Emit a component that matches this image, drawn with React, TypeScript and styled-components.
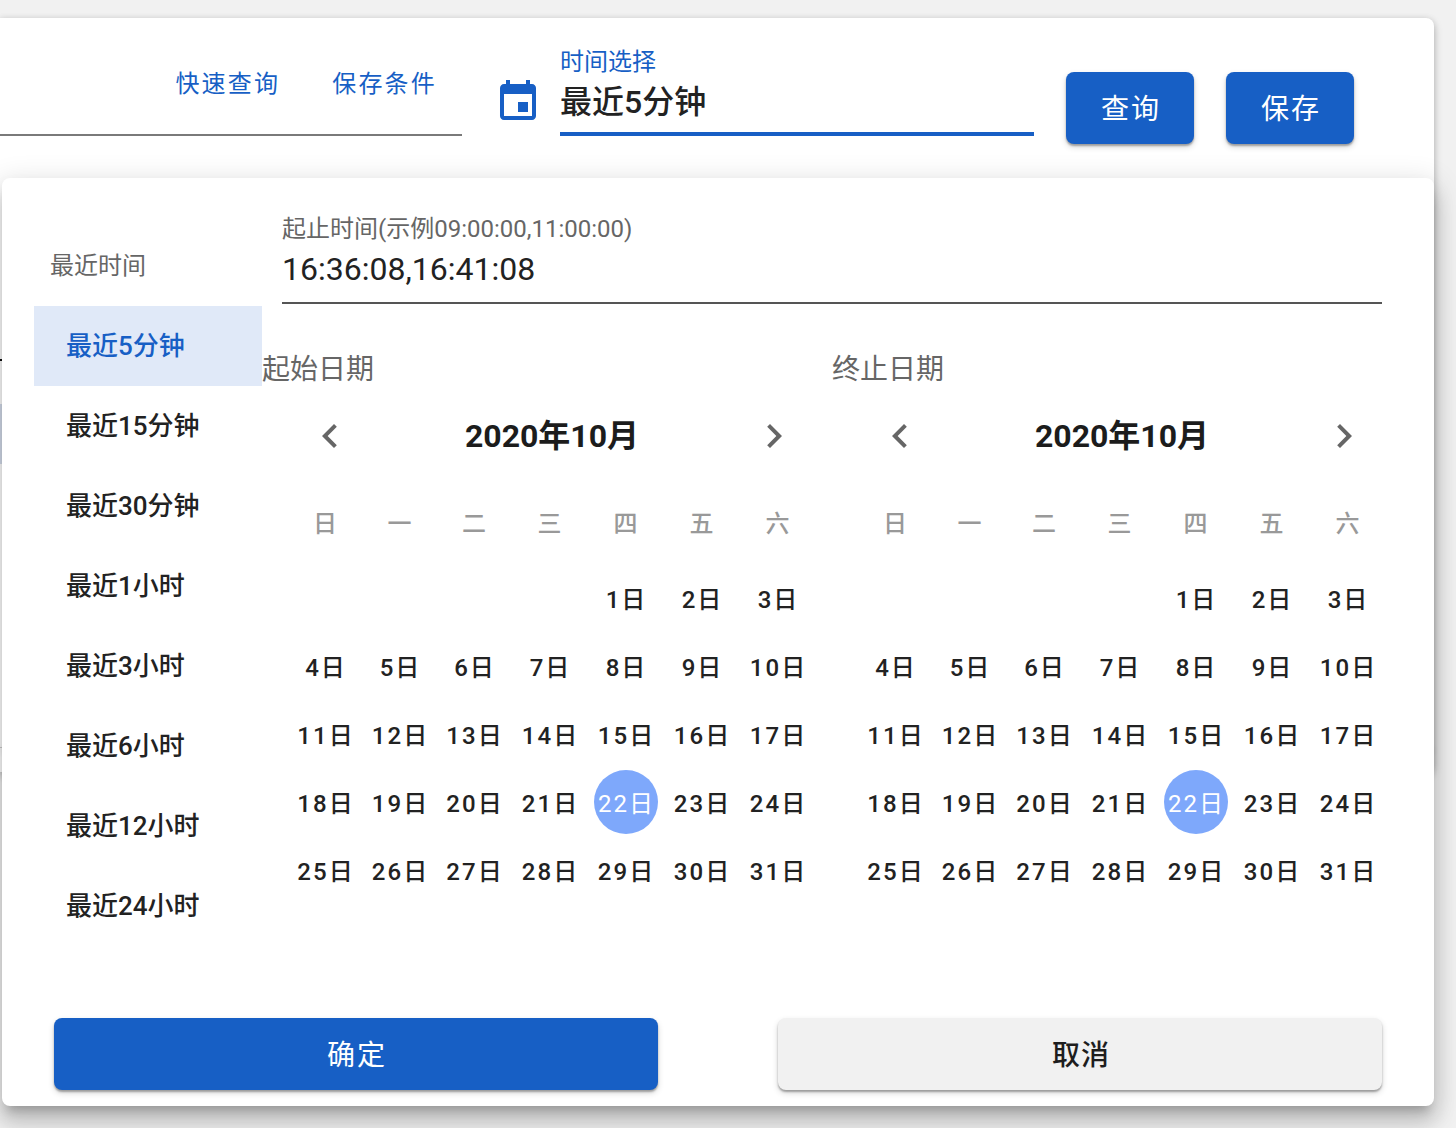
import React from "react";
import styled, { createGlobalStyle } from "styled-components";

const Global = createGlobalStyle`
  html, body { margin: 0; padding: 0; background: #f1f1f1; }
  body { font-family: Roboto, "Noto Sans CJK SC", sans-serif; }
  * { box-sizing: border-box; }
`;

const BLUE = "#175fc5";

const Page = styled.div`
  position: relative;
  height: 1128px;
  width: 1456px;
  padding-top: 18px;
  overflow: hidden;
`;
const Card = styled.section`
  width: 1434px;
  height: 754px;
  background: #fff;
  border-radius: 0 8px 8px 0;
  box-shadow: 0 4px 8px rgba(0,0,0,.25), 0 0 6px rgba(0,0,0,.08);
`;
const HeaderRow = styled.div`
  display: flex;
  align-items: flex-start;
  height: 118px;
`;
const SearchBox = styled.div`
  width: 462px;
  height: 118px;
  border-bottom: 2px solid #7a7a7a;
  display: flex;
  justify-content: flex-end;
  gap: 54px;
  padding: 49px 27px 0 0;
`;
const LinkText = styled.a`
  color: ${BLUE};
  font-size: 24px;
  line-height: 34px;
  letter-spacing: 2.2px;
  margin-right: -2px;
`;
const FieldIcon = styled.svg`
  width: 48px;
  height: 48px;
  margin: 60px 18px 0 32px;
  fill: ${BLUE};
  flex: none;
`;
const DateField = styled.div`
  width: 474px;
  margin-top: 30px;
  padding-bottom: 10px;
  border-bottom: 4px solid ${BLUE};
  height: 88px;
`;
const FieldLabel = styled.div`
  color: ${BLUE};
  font-size: 24px;
  line-height: 28px;
`;
const FieldValue = styled.div`
  color: #222;
  font-size: 32px;
  font-weight: 500;
  line-height: 40px;
  margin-top: 6px;
`;
const HeaderButtons = styled.div`
  display: flex;
  gap: 32px;
  margin: 54px 0 0 32px;
`;
const Raised = styled.button<{ $secondary?: boolean; $wide?: boolean }>`
  width: ${p => (p.$wide ? "604px" : "128px")};
  height: 72px;
  border: 0;
  border-radius: 8px;
  padding: 0 0 2px 2px;
  font-family: inherit;
  font-size: 28px;
  letter-spacing: ${p => (p.$secondary ? "1px" : "2px")};
  font-weight: ${p => (p.$secondary ? 500 : 400)};
  color: ${p => (p.$secondary ? "#1e1e1e" : "#fff")};
  background: ${p => (p.$secondary ? "#f1f1f1" : BLUE)};
  box-shadow: 0 2px 2px rgba(0,0,0,.3), 0 3px 6px rgba(0,0,0,.16);
`;
const BehindTable = styled.div`
  margin-top: 223px;
`;
const BehindHead = styled.div`
  height: 2px;
  background: #111;
`;
const BehindRow = styled.div<{ $tint?: boolean }>`
  height: ${p => (p.$tint ? "60px" : "43px")};
  background: ${p => (p.$tint ? "#d4dcec" : "transparent")};
`;
const BehindFooter = styled.div`
  height: 1px;
  margin-top: 283px;
  background: #ccc;
  box-shadow: 0 3px 6px rgba(0,0,0,.3);
`;
const Popup = styled.div`
  position: absolute;
  left: 2px;
  top: 178px;
  width: 1432px;
  height: 928px;
  background: #fff;
  border-radius: 8px;
  display: flex;
  flex-direction: column;
  box-shadow: 0 10px 10px -6px rgba(0,0,0,.2), 0 16px 20px 2px rgba(0,0,0,.14), 0 6px 28px 4px rgba(0,0,0,.12);
`;
const PopupMain = styled.div`
  flex: 1;
  display: flex;
  padding-left: 32px;
`;
const Menu = styled.nav`
  width: 228px;
  flex: none;
  padding-top: 71px;
`;
const MenuTitle = styled.div`
  color: #666;
  font-size: 24px;
  line-height: 34px;
  height: 57px;
  padding-left: 16px;
`;
const MenuItem = styled.div<{ $active?: boolean }>`
  height: 80px;
  padding: 0 0 6px 32px;
  display: flex;
  align-items: center;
  font-size: 26px;
  font-weight: 500;
  color: ${p => (p.$active ? BLUE : "#222")};
  background: ${p => (p.$active ? "#e0e9f8" : "transparent")};
`;
const RightColumn = styled.div`
  flex: 1;
  padding-top: 37px;
`;
const RangeField = styled.div`
  width: 1100px;
  margin-left: 20px;
  height: 89px;
  border-bottom: 2px solid #555;
`;
const RangeLabel = styled.div`
  color: #666;
  font-size: 24px;
  line-height: 28px;
  height: 34px;
  white-space: nowrap;
`;
const RangeValue = styled.div`
  color: #222;
  font-size: 32px;
  line-height: 40px;
`;
const Calendars = styled.div`
  display: flex;
  margin-top: 46px;
`;
const Pane = styled.div`
  width: 570px;
  flex: none;
`;
const PaneTitle = styled.div`
  color: #666;
  font-size: 28px;
  line-height: 40px;
`;
const MonthBar = styled.div`
  width: 492px;
  height: 48px;
  margin: 22px 0 0 44px;
  display: flex;
  align-items: center;
  justify-content: space-between;
`;
const MonthName = styled.div`
  font-size: 32px;
  font-weight: 700;
  color: #1c1c1c;
  padding-bottom: 6px;
`;
const Chevron = styled.svg`
  width: 48px;
  height: 48px;
  fill: #666;
  flex: none;
`;
const Grid = styled.div<{ $top: number }>`
  display: grid;
  grid-template-columns: 75px 74px 75px 76px 76px 76px 76px;
  grid-auto-rows: 68px;
  margin: ${p => p.$top}px 0 0 26px;
`;
const Weekday = styled.div`
  display: flex;
  align-items: center;
  justify-content: center;
  font-size: 24px;
  font-weight: 500;
  color: #999;
  padding: 0 1px 2px 0;
`;
const DayCell = styled.div`
  display: flex;
  align-items: center;
  justify-content: center;
`;
const Day = styled.div<{ $selected?: boolean }>`
  width: 64px;
  height: 64px;
  flex: none;
  border-radius: 50%;
  display: flex;
  align-items: center;
  justify-content: center;
  white-space: nowrap;
  font-size: 24px;
  letter-spacing: 2px;
  padding: 0 0 2px 1px;
  font-weight: ${p => (p.$selected ? 400 : 500)};
  color: ${p => (p.$selected ? "#fff" : "#222")};
  background: ${p => (p.$selected ? "#7ea8fb" : "transparent")};
`;
const Footer = styled.div`
  display: flex;
  justify-content: space-between;
  padding: 0 52px 16px;
`;

const ranges = ["最近5分钟", "最近15分钟", "最近30分钟", "最近1小时", "最近3小时", "最近6小时", "最近12小时", "最近24小时"];
const weekdays = ["日", "一", "二", "三", "四", "五", "六"];
const blanks = [0, 1, 2, 3];
const days = Array.from({ length: 31 }, (_, i) => i + 1);

function Calendar({ title }: { title: string }) {
  return (
    <Pane>
      <PaneTitle>{title}</PaneTitle>
      <MonthBar>
        <Chevron viewBox="0 0 24 24"><path d="M15.41 7.41L14 6l-6 6 6 6 1.41-1.41L10.83 12z" /></Chevron>
        <MonthName>2020年10月</MonthName>
        <Chevron viewBox="0 0 24 24"><path d="M10 6L8.59 7.41 13.17 12l-4.58 4.59L10 18l6-6z" /></Chevron>
      </MonthBar>
      <Grid $top={28}>
        {weekdays.map(w => <Weekday key={w}>{w}</Weekday>)}
      </Grid>
      <Grid $top={8}>
        {blanks.map(b => <DayCell key={b} />)}
        {days.map(d => (
          <DayCell key={d}>
            <Day $selected={d === 22}>{d}日</Day>
          </DayCell>
        ))}
      </Grid>
    </Pane>
  );
}

export default function App() {
  return (
    <Page>
      <Global />
      <Card>
        <HeaderRow>
          <SearchBox>
            <LinkText>快速查询</LinkText>
            <LinkText>保存条件</LinkText>
          </SearchBox>
          <FieldIcon viewBox="0 0 24 24">
            <path d="M17 12h-5v5h5v-5zM16 1v2H8V1H6v2H5c-1.11 0-1.99.9-1.99 2L3 19c0 1.1.89 2 2 2h14c1.1 0 2-.9 2-2V5c0-1.1-.9-2-2-2h-1V1h-2zm3 18H5V8h14v11z" />
          </FieldIcon>
          <DateField>
            <FieldLabel>时间选择</FieldLabel>
            <FieldValue>最近5分钟</FieldValue>
          </DateField>
          <HeaderButtons>
            <Raised>查询</Raised>
            <Raised>保存</Raised>
          </HeaderButtons>
        </HeaderRow>
        <BehindTable>
          <BehindHead />
          <BehindRow />
          <BehindRow $tint />
          <BehindFooter />
        </BehindTable>
      </Card>
      <Popup>
        <PopupMain>
          <Menu>
            <MenuTitle>最近时间</MenuTitle>
            {ranges.map((r, i) => <MenuItem key={r} $active={i === 0}>{r}</MenuItem>)}
          </Menu>
          <RightColumn>
            <RangeField>
              <RangeLabel>起止时间(示例09:00:00,11:00:00)</RangeLabel>
              <RangeValue>16:36:08,16:41:08</RangeValue>
            </RangeField>
            <Calendars>
              <Calendar title="起始日期" />
              <Calendar title="终止日期" />
            </Calendars>
          </RightColumn>
        </PopupMain>
        <Footer>
          <Raised $wide>确定</Raised>
          <Raised $wide $secondary>取消</Raised>
        </Footer>
      </Popup>
    </Page>
  );
}
